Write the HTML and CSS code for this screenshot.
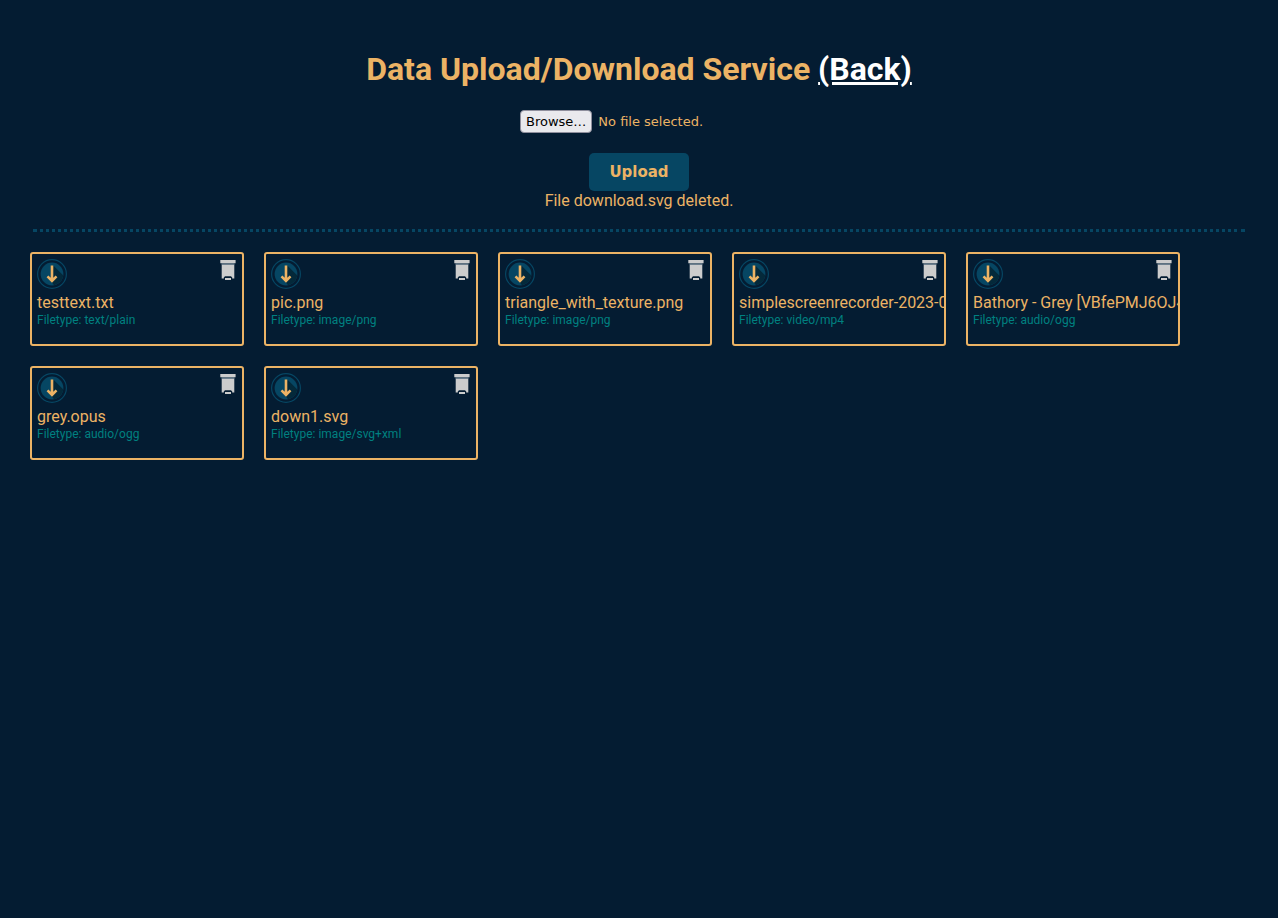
FILE: index.html
```
<!DOCTYPE html>
<html lang="en">
<head>
<meta charset="utf-8">
<title>Data Upload/Download Service</title>
<link rel="stylesheet" href="styles.css">
</head>
<body>
<svg class="sprite" width="0" height="0" aria-hidden="true">
  <symbol id="download" viewBox="0 0 30 30">
    <circle cx="15" cy="15" r="14.4" fill="none" stroke="#064663" stroke-width="1.2"/>
    <circle cx="15" cy="15" r="11.4" fill="#064663"/>
    <path d="M16.3 6.5L26.3 16.5A11.4 11.4 0 0 1 17 26.2L15 23.5Z" fill="#04293a"/>
    <path d="M15 6.4V22M10.5 17.3L15 21.8L19.5 17.3" fill="none" stroke="#ecb365" stroke-width="2.6"/>
  </symbol>
  <symbol id="trash" viewBox="0 0 16 20">
    <path d="M0.3 0H15.6V3.2H0.3Z" fill="#ccc"/>
    <path d="M1.5 3.2H14.5V5H1.5Z" fill="#6d7f8e"/>
    <path d="M1.7 5H14.3V18.6H12.2V17.6L11 16.3H5L3.8 17.6V18.6H1.7Z" fill="#ccc"/>
    <path d="M5 18H11V20H5Z" fill="#ccc"/>
  </symbol>
</svg>
<header class="header">
  <h1 class="title">Data Upload/Download Service <a class="back" href="#">(Back)</a></h1>
  <form class="upload">
    <label class="picker">
      <input class="picker-input" type="file">
      <span class="picker-button">Browse…</span>
      <span>No file selected.</span>
    </label>
    <button class="submit" type="button">Upload</button>
  </form>
  <p class="status">File download.svg deleted.</p>
</header>
<hr class="divider">
<main class="files">
  <article class="card">
    <div class="actions"><a href="#" aria-label="Download"><svg class="download"><use href="#download"/></svg></a><button class="delete" aria-label="Delete"><svg class="trash"><use href="#trash"/></svg></button></div>
    <div class="name">testtext.txt</div><div class="type">Filetype: text/plain</div>
  </article>
  <article class="card">
    <div class="actions"><a href="#" aria-label="Download"><svg class="download"><use href="#download"/></svg></a><button class="delete" aria-label="Delete"><svg class="trash"><use href="#trash"/></svg></button></div>
    <div class="name">pic.png</div><div class="type">Filetype: image/png</div>
  </article>
  <article class="card">
    <div class="actions"><a href="#" aria-label="Download"><svg class="download"><use href="#download"/></svg></a><button class="delete" aria-label="Delete"><svg class="trash"><use href="#trash"/></svg></button></div>
    <div class="name">triangle_with_texture.png</div><div class="type">Filetype: image/png</div>
  </article>
  <article class="card">
    <div class="actions"><a href="#" aria-label="Download"><svg class="download"><use href="#download"/></svg></a><button class="delete" aria-label="Delete"><svg class="trash"><use href="#trash"/></svg></button></div>
    <div class="name">simplescreenrecorder-2023-0</div><div class="type">Filetype: video/mp4</div>
  </article>
  <article class="card">
    <div class="actions"><a href="#" aria-label="Download"><svg class="download"><use href="#download"/></svg></a><button class="delete" aria-label="Delete"><svg class="trash"><use href="#trash"/></svg></button></div>
    <div class="name">Bathory - Grey [VBfePMJ6OJ4</div><div class="type">Filetype: audio/ogg</div>
  </article>
  <article class="card">
    <div class="actions"><a href="#" aria-label="Download"><svg class="download"><use href="#download"/></svg></a><button class="delete" aria-label="Delete"><svg class="trash"><use href="#trash"/></svg></button></div>
    <div class="name">grey.opus</div><div class="type">Filetype: audio/ogg</div>
  </article>
  <article class="card">
    <div class="actions"><a href="#" aria-label="Download"><svg class="download"><use href="#download"/></svg></a><button class="delete" aria-label="Delete"><svg class="trash"><use href="#trash"/></svg></button></div>
    <div class="name">down1.svg</div><div class="type">Filetype: image/svg+xml</div>
  </article>
</main>
</body>
</html>
```
FILE: styles.css
```
* {
  box-sizing: border-box;
}

body {
  margin: 0;
  padding: 50px 30px 30px;
  background: #041c32;
  color: #ecb365;
  font: 16px/19px Roboto, sans-serif;
}

.sprite {
  position: absolute;
}

.header,
.upload {
  display: flex;
  flex-direction: column;
  align-items: center;
}

.title {
  margin: 0 0 22px;
  font-size: 32px;
  line-height: 38px;
}

.back {
  color: #fff;
}

.upload {
  gap: 20px;
}

.picker {
  display: flex;
  align-items: center;
  gap: 6px;
  width: 238px;
  font: 13px/17px "DejaVu Sans", sans-serif;
}

.picker-input {
  position: absolute;
  width: 1px;
  height: 1px;
  opacity: 0;
}

.picker-button {
  padding: 2px 5px;
  border: 1px solid #8f8f9d;
  border-radius: 4px;
  background: #e9e9ed;
  color: #000;
}

.submit {
  padding: 10px 20px;
  border: 0;
  border-radius: 5px;
  background: #064663;
  color: #ecb365;
  font: bold 15px/18px "DejaVu Sans", sans-serif;
}

.status {
  margin: 0;
}

.divider {
  margin: 19px 3px 20px;
  border: 0;
  border-top: 3px dotted #064663;
}

.files {
  display: flex;
  flex-wrap: wrap;
  gap: 20px;
}

.card {
  width: 214px;
  height: 94px;
  padding: 5px;
  overflow: hidden;
  border: 2px solid #ecb365;
  border-radius: 3px;
}

.actions {
  display: flex;
  justify-content: space-between;
  align-items: flex-start;
  margin-bottom: 4px;
}

.download,
.trash {
  display: block;
}

.download {
  width: 30px;
  height: 30px;
}

.trash {
  width: 16px;
  height: 20px;
}

.delete {
  padding: 1px;
  border: 0;
  background: none;
}

.name {
  white-space: nowrap;
}

.type {
  color: #008080;
  font-size: 12px;
  line-height: 16px;
}
```
